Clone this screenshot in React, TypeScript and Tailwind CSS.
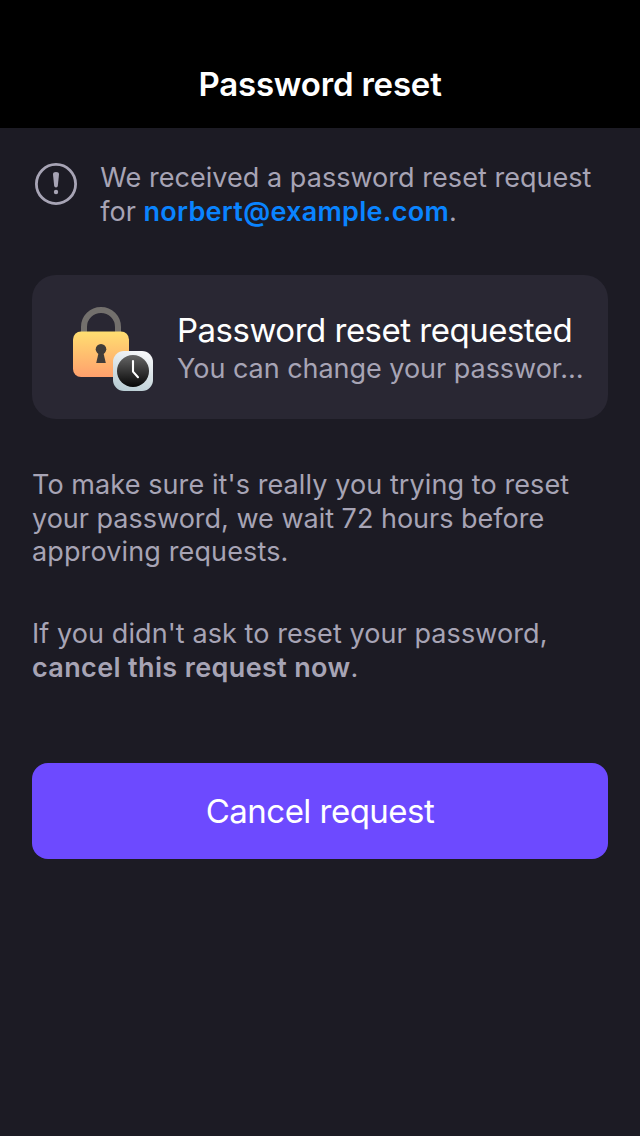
function AlertIcon() {
  return (
    <svg className="h-[42px] w-[42px] shrink-0" viewBox="0 0 42 42" fill="none" aria-hidden="true">
      <circle cx="21" cy="21" r="19.6" stroke="#a7a4b5" strokeWidth="2.8" />
      <path d="M18 11.4Q18 9 21 9Q24 9 24 11.4L22.8 23Q22.6 24.4 21 24.4Q19.4 24.4 19.2 23Z" fill="#a7a4b5" />
      <circle cx="21" cy="29" r="2.2" fill="#a7a4b5" />
    </svg>
  );
}

function LockClockIcon() {
  return (
    <svg className="h-[84px] w-20 shrink-0" viewBox="0 0 80 84" fill="none" aria-hidden="true">
      <defs>
        <linearGradient id="lock-body" x1="28" y1="24" x2="28" y2="70" gradientUnits="userSpaceOnUse">
          <stop stopColor="#ffdf71" />
          <stop offset="1" stopColor="#ffa06d" />
        </linearGradient>
        <linearGradient id="clock-case" x1="66" y1="44" x2="52" y2="84" gradientUnits="userSpaceOnUse">
          <stop stopColor="#f6f7f9" />
          <stop offset="1" stopColor="#b8ccd3" />
        </linearGradient>
        <linearGradient id="clock-face" x1="60" y1="48" x2="60" y2="80" gradientUnits="userSpaceOnUse">
          <stop stopColor="#666666" />
          <stop offset="1" stopColor="#050505" />
        </linearGradient>
      </defs>
      <path d="M11 28V20a17 17 0 0 1 34 0v8" stroke="#73706d" strokeWidth="6" />
      <rect y="24.4" width="56" height="45.6" rx="8" fill="url(#lock-body)" />
      <circle cx="28" cy="42.2" r="5.3" fill="#403c39" />
      <path d="M26 44h4l2.8 12H23.2Z" fill="#403c39" />
      <rect x="40" y="44" width="40" height="40" rx="11" fill="url(#clock-case)" />
      <circle cx="60" cy="64" r="16" fill="url(#clock-face)" />
      <path d="M60 54v10.6l5 5.6" stroke="#fff" strokeWidth="2.1" strokeLinecap="round" strokeLinejoin="round" />
    </svg>
  );
}

export default function App() {
  return (
    <main className="flex h-[1136px] w-[640px] flex-col bg-[#1c1b24] font-['Inter',sans-serif] text-[27px] leading-[33.6px] whitespace-nowrap text-[#a7a4b5]">
      <header className="flex h-32 shrink-0 items-end justify-center bg-black pb-[22px]">
        <h1 className="text-[33px] leading-[44px] font-semibold tracking-[-0.2px] text-white">Password reset</h1>
      </header>

      <div className="flex flex-col px-8">
        <section className="flex h-[147px] gap-[23.3px] pt-[32.5px] pl-[3px]">
          <div className="pt-[2.5px]"><AlertIcon /></div>
          <p className="leading-[34px]">
            <span className="block tracking-[0.04px]">We received a password reset request</span>
            <span className="block">
              for <strong className="font-semibold tracking-[0.29px] text-[#0a84ff]">norbert@example.com</strong>.
            </span>
          </p>
        </section>

        <section className="flex h-36 items-start gap-6 rounded-3xl bg-[#292733] pt-8 pl-[41px]">
          <LockClockIcon />
          <div className="flex flex-col pt-px">
            <h2 className="text-[33px] leading-[44px] font-normal tracking-[-0.5px] text-white">Password reset requested</h2>
            <p className="pt-px leading-8 tracking-[-0.03px]">You can change your passwor…</p>
          </div>
        </section>

        <p className="pt-[49px] leading-[34px]">
          <span className="block tracking-[0.09px]">To make sure it's really you trying to reset</span>
          <span className="block">your password, we wait 72 hours before</span>
          <span className="block leading-8 tracking-[0.13px]">approving requests.</span>
        </p>

        <p className="pt-[48.5px] leading-[34px]">
          <span className="block tracking-[0.08px]">If you didn't ask to reset your password,</span>
          <span className="block"><strong className="font-semibold tracking-[0.36px]">cancel this request now</strong>.</span>
        </p>

        <button type="button" className="mt-[78.5px] h-24 w-full rounded-2xl bg-[#6d4aff] pt-0.5 text-[33px] tracking-[-0.52px] text-white">
          Cancel request
        </button>
      </div>
    </main>
  );
}
